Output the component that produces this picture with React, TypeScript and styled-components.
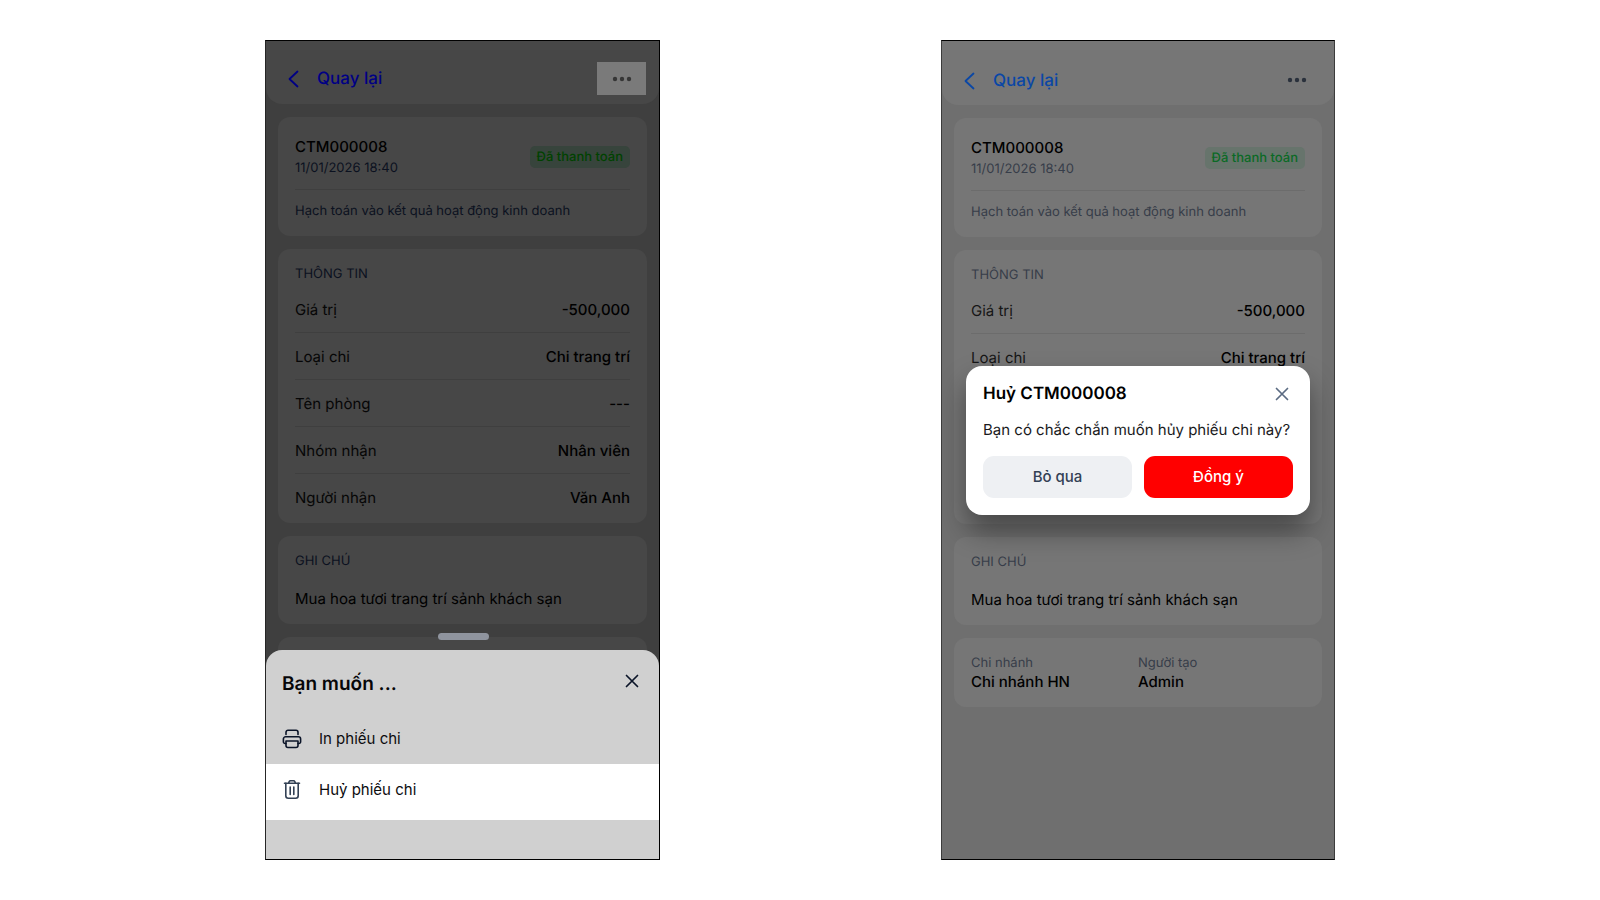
import React from "react";
import styled, { createGlobalStyle, ThemeProvider } from "styled-components";

const GlobalStyle = createGlobalStyle`
  *, *::before, *::after { box-sizing: border-box; }
  body {
    margin: 0;
    background: #fff;
    font-family: Inter, "Liberation Sans", sans-serif;
    font-size: 15px;
    line-height: 20px;
    text-rendering: geometricPrecision;
  }
  button { font: inherit; border: 0; padding: 0; cursor: pointer; }
  h2, h3, p, dl, dd, dt, ul { margin: 0; padding: 0; }
`;

/* Palettes of the receipt screen as seen beneath each kind of overlay. */
const underSheet = {
  page: "#3f3f3f",
  card: "#474747",
  sideLeft: "#262626",
  sideRight: "#000000",
  headerHeight: "63px",
  headerTop: "12px",
  link: "#000084",
  text: "#060606",
  strong: "#000000",
  muted: "#0b1120",
  line: "#3f3f3f",
  more: "#7a7a7a",
  dots: "#363636",
  badge: "#37443c",
  badgeText: "#004200",
};

const underDialog = {
  page: "#6f6f6f",
  card: "#767676",
  sideLeft: "#3c3c3c",
  sideRight: "#3c3c3c",
  headerHeight: "64px",
  headerTop: "14px",
  link: "#0a47a6",
  text: "#161616",
  strong: "#000000",
  muted: "#363d49",
  line: "#6c6c6c",
  more: "transparent",
  dots: "#2a313c",
  badge: "#67746c",
  badgeText: "#0b6a26",
};

const Board = styled.main`
  display: grid;
  grid-template-columns: 395px 394px;
  justify-content: center;
  column-gap: 281px;
  min-height: 100vh;
  padding: 40px 0;
`;

const Phone = styled.section`
  position: relative;
  display: flex;
  flex-direction: column;
  overflow: hidden;
  border: 1px solid #000;
  border-left-color: ${(p) => p.theme.sideLeft};
  border-right-color: ${(p) => p.theme.sideRight};
  background: ${(p) => p.theme.page};
`;

const TopBar = styled.header`
  display: flex;
  align-items: center;
  justify-content: space-between;
  height: ${(p) => p.theme.headerHeight};
  padding: ${(p) => p.theme.headerTop} 13px 0 16px;
  border-radius: 0 0 16px 16px;
  background: ${(p) => p.theme.card};
`;

const BackLink = styled.a`
  display: flex;
  align-items: center;
  gap: 11px;
  padding-top: 1px;
  color: ${(p) => p.theme.link};
  font-size: 17px;
  font-weight: 500;
  text-decoration: none;
`;

const MoreButton = styled.button`
  display: flex;
  align-items: center;
  justify-content: center;
  width: 49px;
  height: 33px;
  background: ${(p) => p.theme.more};
  color: ${(p) => p.theme.dots};
`;

const Cards = styled.div`
  display: flex;
  flex-direction: column;
  gap: 13px;
  padding: 13px 12px;
`;

const Card = styled.article`
  padding: 17px 17px 15px;
  border-radius: 12px;
  background: ${(p) => p.theme.card};
`;

const Summary = styled.div`
  display: flex;
  align-items: center;
  justify-content: space-between;
  padding: 1px 0 11px;
  border-bottom: 1px solid ${(p) => p.theme.line};
`;

const Code = styled.h2`
  color: ${(p) => p.theme.strong};
  font-size: 15px;
  font-weight: 500;
  line-height: 23px;
`;

const Muted = styled.p`
  color: ${(p) => p.theme.muted};
  font-size: 13px;
  line-height: 20px;
`;

const Posting = styled(Muted)`
  padding-top: 11px;
`;

const Badge = styled.span`
  padding: 1px 7px;
  border-radius: 5px;
  background: ${(p) => p.theme.badge};
  color: ${(p) => p.theme.badgeText};
  font-size: 13px;
  font-weight: 500;
`;

const SectionTitle = styled.h3`
  color: ${(p) => p.theme.muted};
  font-size: 13px;
  font-weight: 400;
  line-height: 16px;
`;

const InfoCard = styled(Card)`
  padding-bottom: 2px;
`;

const Info = styled.dl`
  padding-top: 4px;
`;

const InfoRow = styled.div`
  display: flex;
  align-items: center;
  justify-content: space-between;
  height: 47px;
  padding-top: 2px;
  color: ${(p) => p.theme.text};
  border-bottom: 1px solid ${(p) => p.theme.line};
  &:last-child { border-bottom-color: transparent; }
  dd { color: ${(p) => p.theme.strong}; font-weight: 500; }
`;

const Note = styled.p`
  padding-top: 20px;
  color: ${(p) => p.theme.strong};
`;

const Origin = styled.dl`
  display: grid;
  grid-template-columns: 1fr 1fr;
  dt { color: ${(p) => p.theme.muted}; font-size: 13px; line-height: 17px; }
  dd { color: ${(p) => p.theme.strong}; font-weight: 500; }
`;

const Sheet = styled.div`
  position: absolute;
  inset: auto 0 0;
  height: 209px;
  border-radius: 16px 16px 0 0;
  background: #d0d0d0;
`;

const Grip = styled.div`
  position: absolute;
  top: -17px;
  left: 50%;
  width: 51px;
  height: 7px;
  margin-left: -25px;
  border-radius: 4px;
  background: #8f949e;
`;

const SheetHead = styled.div`
  display: flex;
  align-items: center;
  justify-content: space-between;
  height: 66px;
  padding: 0 16px;
  h2 { padding-top: 2px; font-size: 19px; font-weight: 600; line-height: 24px; color: #060608; }
  button { margin-bottom: 4px; }
`;

const CloseButton = styled.button`
  display: flex;
  background: none;
  color: ${(p) => p.color};
`;

const Actions = styled.ul`
  list-style: none;
`;

const Action = styled.button<{ $active?: boolean }>`
  display: flex;
  align-items: center;
  gap: 17px;
  width: 100%;
  height: ${(p) => (p.$active ? "56px" : "48px")};
  padding: 0 16px ${(p) => (p.$active ? "4px" : "2px")};
  background: ${(p) => (p.$active ? "#fff" : "transparent")};
  color: #0c0c0e;
  svg { color: ${(p) => (p.$active ? "#334155" : "#0b1428")}; }
`;

const Dialog = styled.div`
  position: absolute;
  top: 325px;
  left: 24px;
  right: 24px;
  padding: 17px;
  border-radius: 16px;
  background: #fff;
  box-shadow: 0 16px 28px rgba(0, 0, 0, 0.4);
`;

const DialogHead = styled.div`
  display: flex;
  align-items: center;
  justify-content: space-between;
  h2 { font-size: 17px; font-weight: 600; line-height: 20px; }
`;

const Question = styled.p`
  padding: 15px 0 16px;
  color: #1a1a1c;
`;

const Buttons = styled.div`
  display: grid;
  grid-template-columns: 1fr 1fr;
  gap: 12px;
`;

const DialogButton = styled.button<{ $danger?: boolean }>`
  height: 42px;
  border-radius: 11px;
  background: ${(p) => (p.$danger ? "#ff0000" : "#eef0f3")};
  color: ${(p) => (p.$danger ? "#fff" : "#334155")};
  font-weight: 500;
`;

const BackIcon = () => (
  <svg width="24" height="24" viewBox="0 0 24 24" fill="none" stroke="currentColor" strokeWidth="1.800" strokeLinecap="round" strokeLinejoin="round" aria-hidden="true">
    <path d="M15.500 4.500 7.500 12l8 7.500" />
  </svg>
);

const DotsIcon = () => (
  <svg width="20" height="6" viewBox="0 0 20 6" fill="currentColor" aria-hidden="true">
    <circle cx="3" cy="3" r="2.200" />
    <circle cx="10" cy="3" r="2.200" />
    <circle cx="17" cy="3" r="2.200" />
  </svg>
);

const CloseIcon = () => (
  <svg width="22" height="22" viewBox="0 0 22 22" fill="none" stroke="currentColor" strokeWidth="1.700" strokeLinecap="round" aria-hidden="true">
    <path d="M5.500 5.500l11 11M16.500 5.500l-11 11" />
  </svg>
);

const PrintIcon = () => (
  <svg width="20" height="20" viewBox="0 0 20 20" fill="none" stroke="currentColor" strokeWidth="1.600" strokeLinecap="round" strokeLinejoin="round" aria-hidden="true">
    <path d="M4 5.500V3.200A2 2 0 0 1 6 1.200h8a2 2 0 0 1 2 2v2.300" />
    <path d="M4 14.500H3.200a1.800 1.800 0 0 1-1.800-1.800V10A2.200 2.200 0 0 1 3.600 7.800h12.800a2.200 2.200 0 0 1 2.200 2.200v2.700a1.800 1.800 0 0 1-1.800 1.800H16" />
    <path d="M4 12h12v4.500a2 2 0 0 1-2 2H6a2 2 0 0 1-2-2z" />
  </svg>
);

const TrashIcon = () => (
  <svg width="20" height="20" viewBox="0 0 20 20" fill="none" stroke="currentColor" strokeWidth="1.600" strokeLinecap="round" strokeLinejoin="round" aria-hidden="true">
    <path d="M2.500 3.200h15M6.500 3.200l.6-1.500A1.500 1.500 0 0 1 8.500.8h3a1.500 1.500 0 0 1 1.400.9l.6 1.500" />
    <path d="M3.800 3.200v12.600a2.500 2.500 0 0 0 2.500 2.500h7.400a2.500 2.500 0 0 0 2.500-2.500V3.200M8.200 7v7.500M11.800 7v7.500" />
  </svg>
);

const details = [
  ["Giá trị", "-500,000"],
  ["Loại chi", "Chi trang trí"],
  ["Tên phòng", "---"],
  ["Nhóm nhận", "Nhân viên"],
  ["Người nhận", "Văn Anh"],
];

const Receipt = () => (
  <>
    <TopBar>
      <BackLink href="#"><BackIcon />Quay lại</BackLink>
      <MoreButton type="button" aria-label="Thêm"><DotsIcon /></MoreButton>
    </TopBar>
    <Cards>
      <Card>
        <Summary>
          <div>
            <Code>CTM000008</Code>
            <Muted>11/01/2026 18:40</Muted>
          </div>
          <Badge>Đã thanh toán</Badge>
        </Summary>
        <Posting>Hạch toán vào kết quả hoạt động kinh doanh</Posting>
      </Card>
      <InfoCard>
        <SectionTitle>THÔNG TIN</SectionTitle>
        <Info>
          {details.map(([label, value]) => (
            <InfoRow key={label}>
              <dt>{label}</dt>
              <dd>{value}</dd>
            </InfoRow>
          ))}
        </Info>
      </InfoCard>
      <Card>
        <SectionTitle>GHI CHÚ</SectionTitle>
        <Note>Mua hoa tươi trang trí sảnh khách sạn</Note>
      </Card>
      <Card>
        <Origin>
          <div><dt>Chi nhánh</dt><dd>Chi nhánh HN</dd></div>
          <div><dt>Người tạo</dt><dd>Admin</dd></div>
        </Origin>
      </Card>
    </Cards>
  </>
);

export default function App() {
  return (
    <>
      <GlobalStyle />
      <Board>
        <ThemeProvider theme={underSheet}>
          <Phone>
            <Receipt />
            <Sheet role="dialog" aria-labelledby="sheet-title">
              <Grip />
              <SheetHead>
                <h2 id="sheet-title">Bạn muốn ...</h2>
                <CloseButton type="button" aria-label="Đóng" color="#0b1428"><CloseIcon /></CloseButton>
              </SheetHead>
              <Actions>
                <li><Action type="button"><PrintIcon />In phiếu chi</Action></li>
                <li><Action type="button" $active><TrashIcon />Huỷ phiếu chi</Action></li>
              </Actions>
            </Sheet>
          </Phone>
        </ThemeProvider>
        <ThemeProvider theme={underDialog}>
          <Phone>
            <Receipt />
            <Dialog role="dialog" aria-labelledby="dialog-title">
              <DialogHead>
                <h2 id="dialog-title">Huỷ CTM000008</h2>
                <CloseButton type="button" aria-label="Đóng" color="#5b6b82"><CloseIcon /></CloseButton>
              </DialogHead>
              <Question>Bạn có chắc chắn muốn hủy phiếu chi này?</Question>
              <Buttons>
                <DialogButton type="button">Bỏ qua</DialogButton>
                <DialogButton type="button" $danger>Đồng ý</DialogButton>
              </Buttons>
            </Dialog>
          </Phone>
        </ThemeProvider>
      </Board>
    </>
  );
}
